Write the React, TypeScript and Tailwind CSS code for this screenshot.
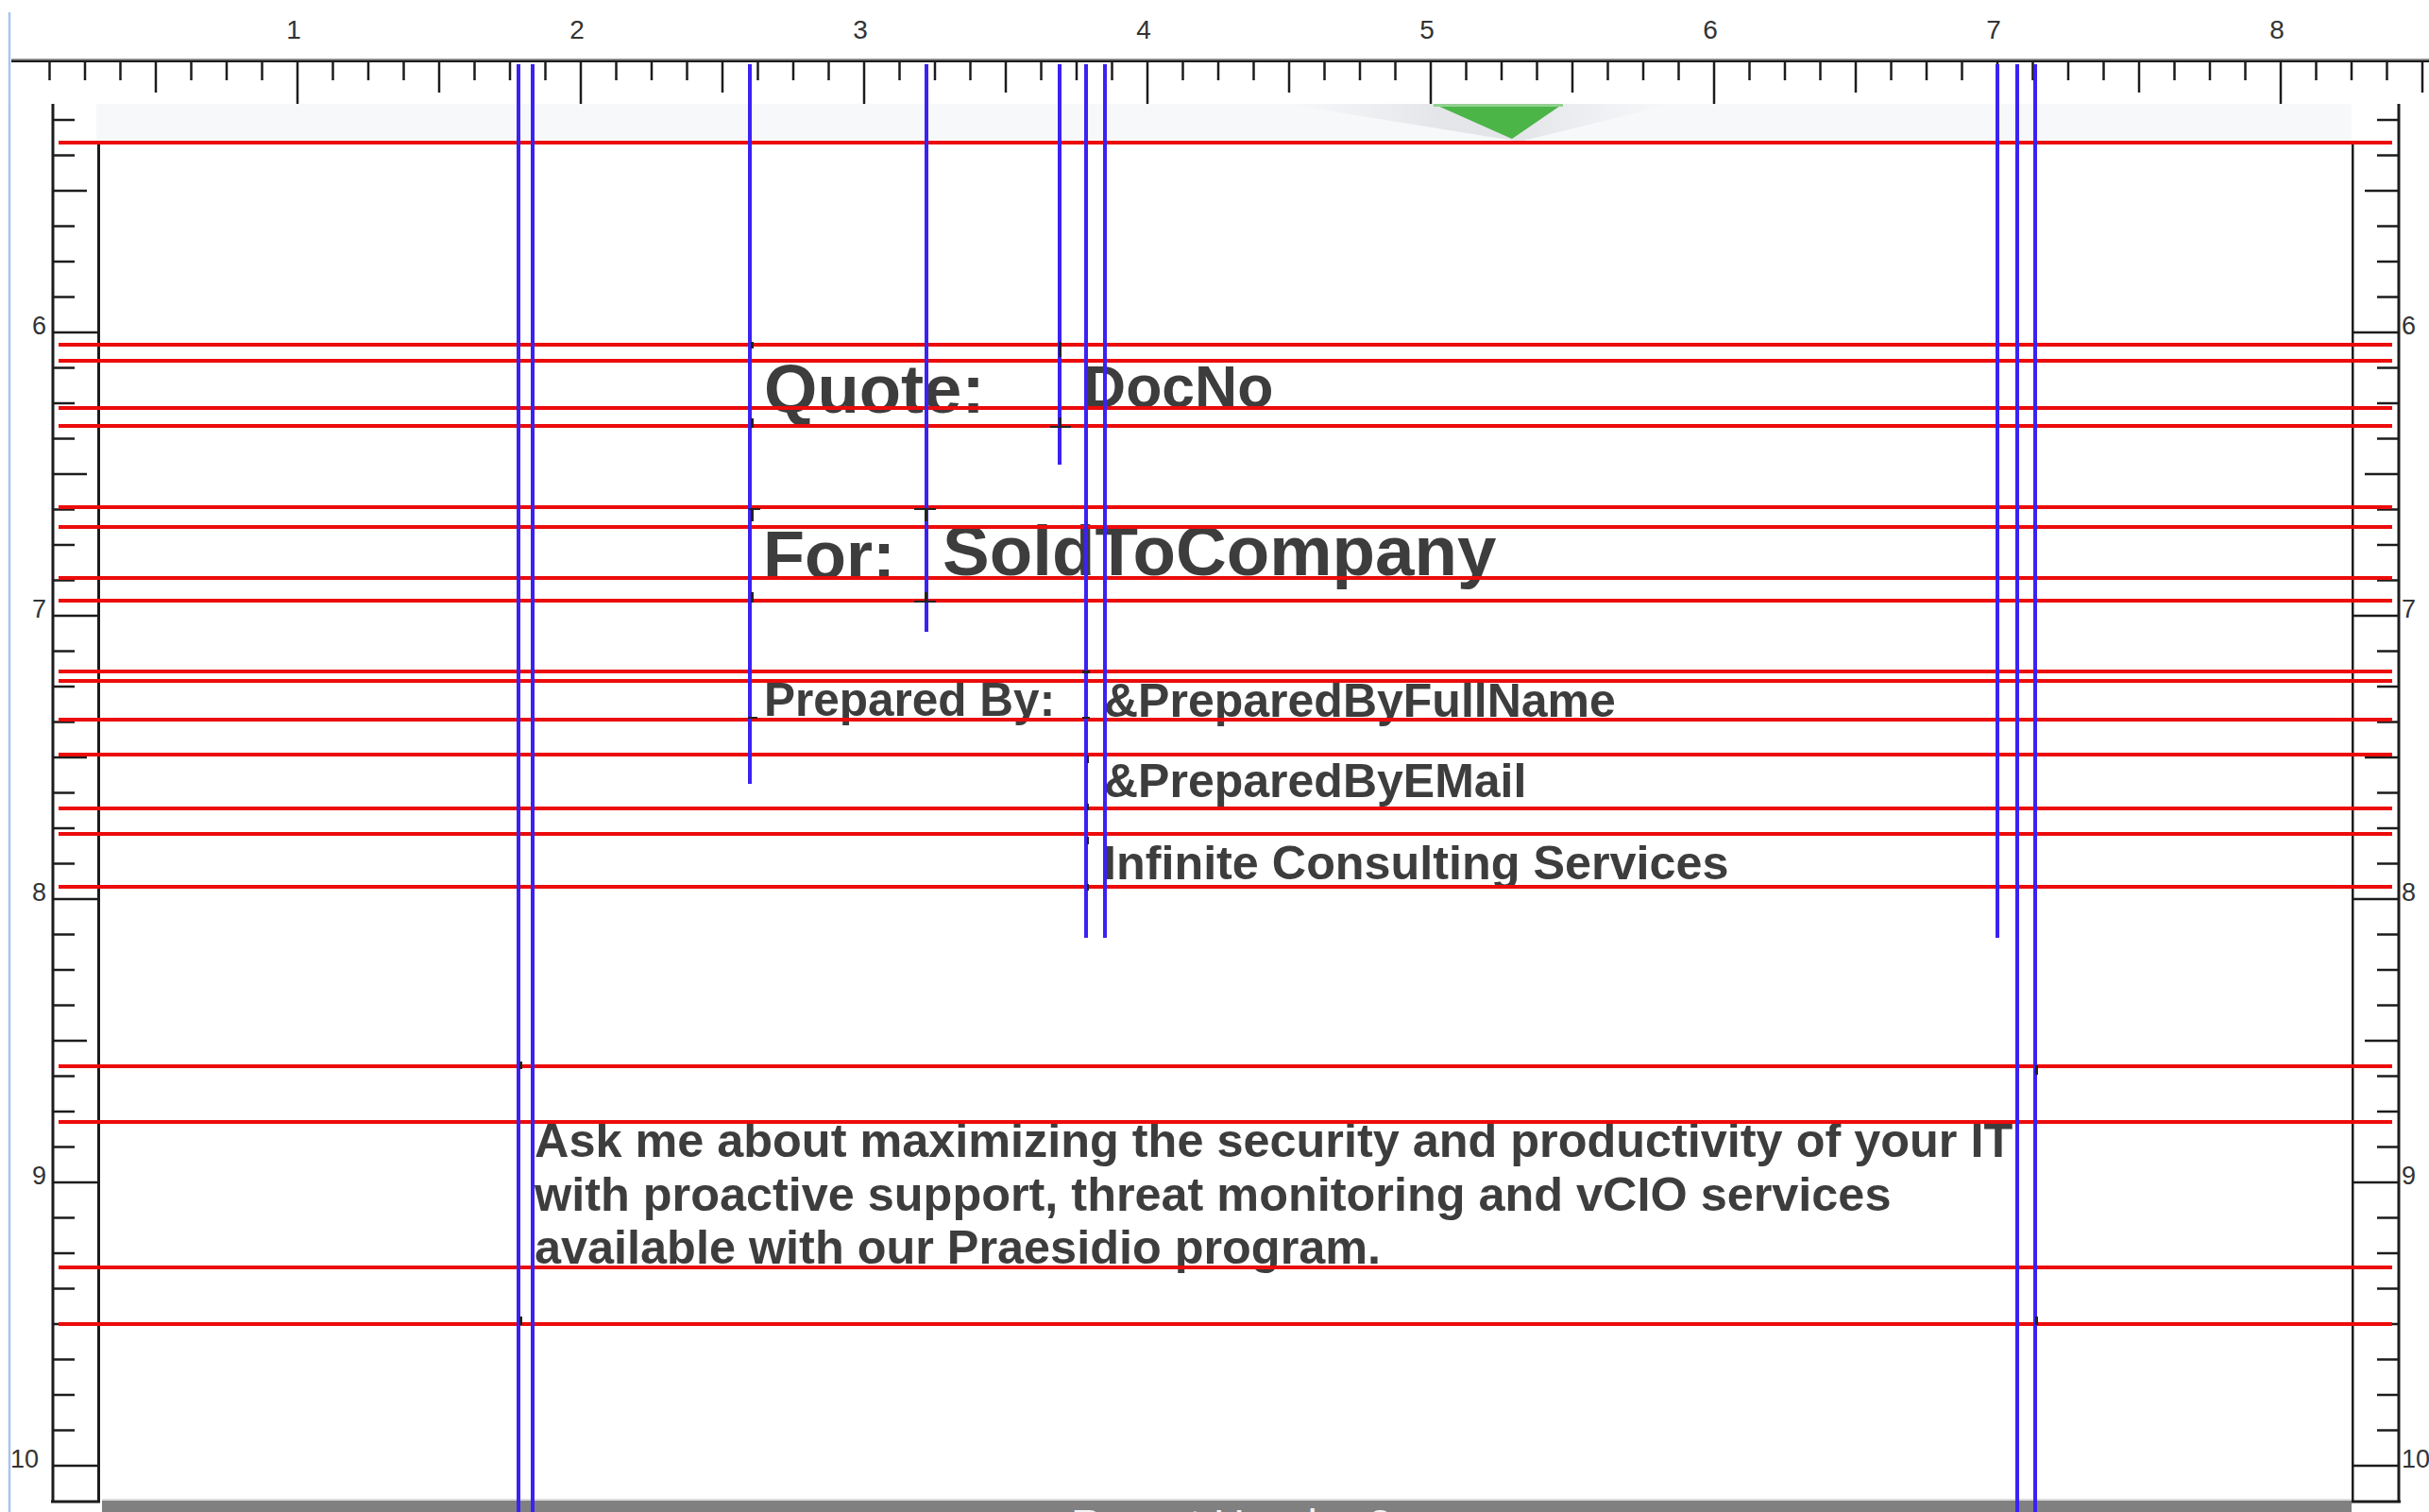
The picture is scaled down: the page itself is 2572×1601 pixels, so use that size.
const INK = "#1c1c1c";
const RULER_BLUE = "#a8c4ee";
const FONT = "'Liberation Sans', Arial, sans-serif";

// horizontal guides (red), absolute y on the canvas
const redGuides = [151, 365, 382, 432, 451, 537, 558, 612, 636, 711, 721, 762, 799, 856, 883, 939, 1129, 1188, 1342, 1402];

// vertical guides (blue), absolute x and where they stop
const blueGuides = [
  { x: 549, end: 1601 },
  { x: 564, end: 1601 },
  { x: 794, end: 830 },
  { x: 981, end: 669 },
  { x: 1122, end: 492 },
  { x: 1150, end: 993 },
  { x: 1170, end: 993 },
  { x: 2115, end: 993 },
  { x: 2136, end: 1601 },
  { x: 2155, end: 1601 },
];

// little corner handles of the report fields
const handles = [
  { x: 795, y: 362, w: 3, h: 7 },
  { x: 1121, y: 362, w: 3, h: 16 },
  { x: 795, y: 443, w: 3, h: 10 },
  { x: 1121, y: 442, w: 3, h: 11 },
  { x: 1112, y: 451, w: 22, h: 2 },
  { x: 793, y: 538, w: 12, h: 2 },
  { x: 795, y: 538, w: 3, h: 14 },
  { x: 968, y: 538, w: 23, h: 2 },
  { x: 979, y: 538, w: 3, h: 14 },
  { x: 795, y: 627, w: 3, h: 11 },
  { x: 979, y: 627, w: 3, h: 11 },
  { x: 968, y: 636, w: 23, h: 2 },
  { x: 1146, y: 710, w: 8, h: 3 },
  { x: 792, y: 759, w: 10, h: 2 },
  { x: 1146, y: 759, w: 8, h: 2 },
  { x: 1151, y: 800, w: 2, h: 8 },
  { x: 1151, y: 851, w: 2, h: 7 },
  { x: 1151, y: 886, w: 2, h: 8 },
  { x: 1151, y: 936, w: 2, h: 7 },
  { x: 550, y: 1124, w: 3, h: 8 },
  { x: 2155, y: 1128, w: 3, h: 10 },
  { x: 2155, y: 1394, w: 3, h: 9 },
  { x: 550, y: 1394, w: 3, h: 9 },
];

function TopRuler() {
  const ticks = [];
  for (let k = 1; 15 + 37.5 * k < 2572; k++) {
    const x = 15 + 37.5 * k;
    const y2 = k % 8 === 0 ? 110 : k % 4 === 0 ? 98 : 85;
    ticks.push(<line key={k} x1={x} x2={x} y1={65} y2={y2} stroke={INK} strokeWidth={2.5} />);
  }
  const labels = [1, 2, 3, 4, 5, 6, 7, 8];
  return (
    <svg width={2572} height={110} className="block shrink-0">
      <line x1={10} x2={10} y1={13} y2={110} stroke={RULER_BLUE} strokeWidth={2.5} />
      <rect x={12} y={62} width={2560} height={1.5} fill="#9c9c9c" />
      <rect x={12} y={63.5} width={2560} height={2.5} fill={INK} />
      {ticks}
      {labels.map((n) => (
        <text key={n} x={15 + 300 * n - 4} y={41} textAnchor="middle" fontFamily={FONT} fontSize={28} fill="#333">
          {n}
        </text>
      ))}
    </svg>
  );
}

function SideRuler({ side }: { side: "left" | "right" }) {
  const left = side === "left";
  const top = 110;
  const ticks = [];
  for (let k = -6; k <= 32; k++) {
    const y = 352 + 37.5 * k - top;
    const m = ((k % 8) + 8) % 8;
    const len = m === 0 ? 48 : m === 4 ? 36 : 23;
    const x1 = left ? 56 : 50;
    const x2 = left ? 56 + len : 50 - len;
    ticks.push(<line key={k} x1={x1} x2={x2} y1={y} y2={y} stroke={INK} strokeWidth={2.5} />);
  }
  const inches = [6, 7, 8, 9, 10];
  return (
    <svg width={left ? 108 : 82} height={1491} className="block shrink-0">
      {left && <line x1={10} x2={10} y1={0} y2={1491} stroke={RULER_BLUE} strokeWidth={2.5} />}
      {left && <rect x={102} y={0} width={6} height={41} fill="#f7f8fa" />}
      {/* outer ruler edge */}
      <line x1={left ? 56 : 50} x2={left ? 56 : 50} y1={-1} y2={1480} stroke={INK} strokeWidth={3} />
      {/* page edge */}
      <line x1={left ? 104.5 : 1} x2={left ? 104.5 : 1} y1={42} y2={1480} stroke={INK} strokeWidth={3} />
      <line x1={left ? 54 : -1} x2={left ? 106 : 52} y1={1480} y2={1480} stroke={INK} strokeWidth={3} />
      {ticks}
      {inches.map((n) => {
        const y = 352 + 300 * (n - 6) - top + 2;
        if (left) {
          return n === 10 ? (
            <text key={n} x={11} y={y} textAnchor="start" fontFamily={FONT} fontSize={27} fill="#333">
              {n}
            </text>
          ) : (
            <text key={n} x={49} y={y} textAnchor="end" fontFamily={FONT} fontSize={27} fill="#333">
              {n}
            </text>
          );
        }
        return (
          <text key={n} x={53} y={y} textAnchor="start" fontFamily={FONT} fontSize={27} fill="#333">
            {n}
          </text>
        );
      })}
    </svg>
  );
}

function BandMarker() {
  return (
    <svg width={410} height={41} className="absolute left-[1253px] top-0">
      <defs>
        <linearGradient id="fan" x1="0" x2="1" y1="0" y2="0">
          <stop offset="0" stopColor="#e6e7ea" stopOpacity="0" />
          <stop offset="0.4" stopColor="#e2e3e6" stopOpacity="0.9" />
          <stop offset="0.6" stopColor="#e2e3e6" stopOpacity="0.9" />
          <stop offset="1" stopColor="#e6e7ea" stopOpacity="0" />
        </linearGradient>
      </defs>
      <polygon points="0,0 410,0 248,40" fill="url(#fan)" />
      <polygon points="157,0 294,0 240,37" fill="#4bb548" />
      <rect x={157} y={0} width={137} height={3} fill="#93d191" />
    </svg>
  );
}

function Field({ x, y, size, children }: { x: number; y: number; size: number; children: React.ReactNode }) {
  // x / y are canvas coordinates of the field's text box
  return (
    <div
      className="absolute whitespace-nowrap font-bold leading-none text-[#3d3d3d]"
      style={{ left: x - 108, top: y - 151, fontSize: size, fontFamily: FONT }}
    >
      {children}
    </div>
  );
}

export default function App() {
  return (
    <div className="relative h-[1601px] w-[2572px] overflow-hidden bg-white" style={{ fontFamily: FONT }}>
      <TopRuler />
      <div className="flex h-[1491px]">
        <SideRuler side="left" />
        <div className="flex w-[2382px] flex-col">
          <div className="relative h-[41px] shrink-0 bg-[#f7f8fa]">
            <BandMarker />
          </div>
          <div className="relative flex-1 bg-white">
            <Field x={809} y={376} size={72.5}>Quote:</Field>
            <Field x={1147} y={378} size={62.5}>DocNo</Field>
            <Field x={808} y={552} size={72}>For:</Field>
            <Field x={998} y={547} size={74.5}>SoldToCompany</Field>
            <Field x={809} y={716} size={49.5}>Prepared By:</Field>
            <Field x={1169} y={717} size={50}>&amp;PreparedByFullName</Field>
            <Field x={1169} y={802} size={50}>&amp;PreparedByEMail</Field>
            <Field x={1168} y={889} size={50.3}>Infinite Consulting Services</Field>
            <div
              className="absolute whitespace-nowrap text-[50.4px] font-bold leading-[56.5px] text-[#3d3d3d]"
              style={{ left: 566 - 108, top: 1180 - 151 }}
            >
              Ask me about maximizing the security and productivity of your IT
              <br />
              with proactive support, threat monitoring and vCIO services
              <br />
              available with our Praesidio program.
            </div>
          </div>
          <div className="h-[14px] shrink-0 overflow-hidden border-t-2 border-[#dadada] bg-[#808080] pl-[1026px] pt-[3px]">
            <div className="whitespace-nowrap text-[46px] leading-none text-[#f4f4f4]">Report Header 2</div>
          </div>
        </div>
        <SideRuler side="right" />
      </div>

      {/* designer guides and handles drawn over the canvas */}
      <div className="pointer-events-none absolute inset-0">
        {redGuides.map((y) => (
          <div key={y} className="absolute left-[62px] h-[4px] w-[2471px] bg-[#ec0b0b]" style={{ top: y - 2 }} />
        ))}
        {blueGuides.map((g) => (
          <div
            key={g.x}
            className="absolute top-[68px] w-[4px] bg-[#3b22f2]"
            style={{ left: g.x - 2, height: g.end - 68 }}
          />
        ))}
        {handles.map((h, i) => (
          <div
            key={i}
            className="absolute bg-[#222]"
            style={{ left: h.x, top: h.y, width: h.w, height: h.h }}
          />
        ))}
      </div>
    </div>
  );
}
